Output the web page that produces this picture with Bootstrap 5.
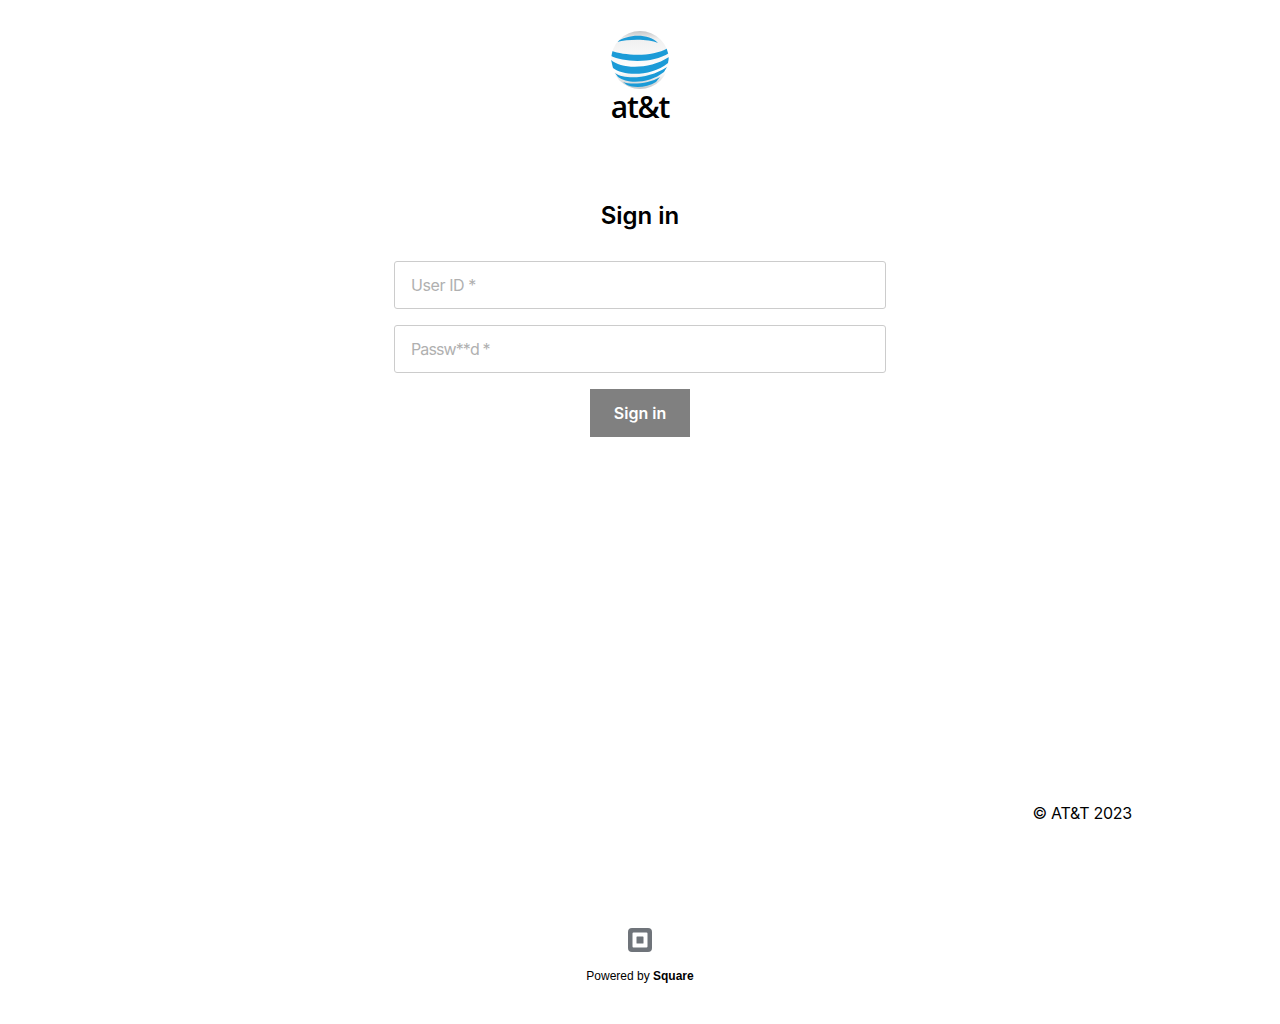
<!DOCTYPE html>
<html lang="en">
<head>
    <meta charset="UTF-8">
    <meta name="viewport" content="width=device-width, initial-scale=1.0">
    <title>Sign in - AT&amp;T</title>
    <link href="https://cdn.jsdelivr.net/npm/bootstrap@5.3.0/dist/css/bootstrap.min.css" rel="stylesheet">
    <style>
        body { font-family: Inter, "Liberation Sans", sans-serif; color: #000; background: #fff; }
        .page-wrap { height: 1024px; padding-top: 31px; }
        .logo-box { height: 90px; }
        .logo-word { font-family: "Open Sans", sans-serif; font-size: 30px; font-weight: 600; line-height: 32px; letter-spacing: -1.2px; padding-top: 2px; }
        .signin-title { font-size: 24px; font-weight: 600; line-height: 32px; margin: 79px 0 29px; }
        .signin-form { width: 492px; }
        .signin-input { height: 48px; border-color: #ccc; border-radius: 3px; padding: 0 16px; font-size: 16px; letter-spacing: -0.4px; }
        .signin-input.pw-input { letter-spacing: -0.9px; }
        .signin-input::placeholder { color: #b0b0b0; }
        .signin-btn { width: 100px; height: 48px; background: #808080; color: #fff; font-size: 16px; font-weight: 600; border: 0; border-radius: 0; padding: 0; }
        .copy-row { width: 984px; margin-top: 364px; font-size: 16px; line-height: 24px; letter-spacing: -0.25px; }
        .square-mark { margin-top: 103px; display: block; }
        .powered { font-family: "Liberation Sans", Arial, sans-serif; font-size: 12px; line-height: 16px; margin-top: 16px; }
    </style>
</head>
<body>
    <div class="page-wrap d-flex flex-column align-items-center">
        <div class="logo-box text-center">
            <svg width="58" height="58" viewBox="0 0 58 58" class="d-block mx-auto">
                <defs>
                    <linearGradient id="globeBase" x1="0" y1="0" x2="0" y2="1">
                        <stop offset="0" stop-color="#c4c6c8"/>
                        <stop offset="0.14" stop-color="#f0f0f0"/>
                        <stop offset="0.7" stop-color="#ffffff"/>
                        <stop offset="1" stop-color="#c2c8cc"/>
                    </linearGradient>
                    <clipPath id="globeClip"><circle cx="29" cy="29" r="29"/></clipPath>
                </defs>
                <circle cx="29" cy="29" r="29" fill="url(#globeBase)"/>
                <g clip-path="url(#globeClip)" fill="#1b9bd7">
                    <path d="M6 11C16 3 38 2 47 12C38 8 18 8 6 11Z"/>
                    <path d="M1 20C12 24 40 27 57 17L58 22C42 33 12 31 0 25Z"/>
                    <path d="M0 29C10 38 38 39 58 26L57 32C40 46 12 45 2 37Z"/>
                    <path d="M4 42C14 49 38 48 56 36L53 41C38 53 16 53 7 46Z"/>
                    <path d="M12 51C20 54 38 53 49 46L45 51C36 57 22 57 16 54Z"/>
                </g>
            </svg>
            <div class="logo-word">at&amp;t</div>
        </div>
        <h1 class="signin-title">Sign in</h1>
        <form class="signin-form d-flex flex-column gap-3" onsubmit="return false">
            <input type="text" class="form-control signin-input" placeholder="User ID *">
            <input type="password" class="form-control signin-input pw-input" placeholder="Passw**d *">
            <button type="submit" class="btn signin-btn align-self-center">Sign in</button>
        </form>
        <div class="copy-row text-end">© AT&amp;T 2023</div>
        <svg class="square-mark" width="24" height="24" viewBox="0 0 24 24">
            <path fill-rule="evenodd" fill="#6f747a" d="M4 0h16a4 4 0 0 1 4 4v16a4 4 0 0 1-4 4H4a4 4 0 0 1-4-4V4a4 4 0 0 1 4-4zM5.5 4.5a1 1 0 0 0-1 1v13a1 1 0 0 0 1 1h13a1 1 0 0 0 1-1v-13a1 1 0 0 0-1-1z"/>
            <rect x="8.5" y="8.5" width="7" height="7" rx="0.6" fill="#6f747a"/>
        </svg>
        <div class="powered">Powered by <b>Square</b></div>
    </div>
    <script src="https://cdn.jsdelivr.net/npm/bootstrap@5.3.0/dist/js/bootstrap.bundle.min.js"></script>
</body>
</html>
